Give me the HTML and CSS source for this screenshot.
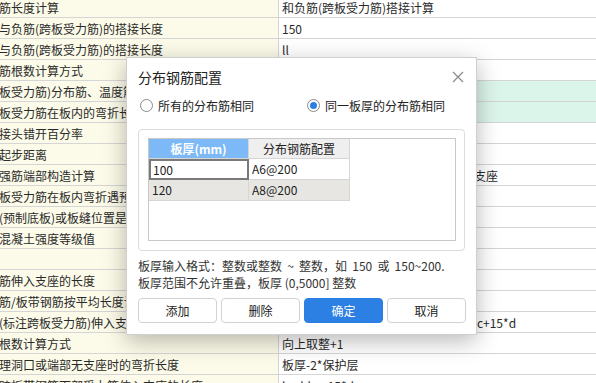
FILE: index.html
```html
<!DOCTYPE html>
<html lang="zh">
<head>
<meta charset="utf-8">
<title>分布钢筋配置</title>
<link rel="stylesheet" href="styles.css">
</head>
<body>
<div class="screen">
  <div class="grid">
    <div class="row"><div class="c1">筋长度计算</div><div class="c2">和负筋(跨板受力筋)搭接计算</div></div>
    <div class="row"><div class="c1">与负筋(跨板受力筋)的搭接长度</div><div class="c2">150</div></div>
    <div class="row"><div class="c1">与负筋(跨板受力筋)的搭接长度</div><div class="c2">ll</div></div>
    <div class="row"><div class="c1">筋根数计算方式</div><div class="c2">向下取整+1</div></div>
    <div class="row"><div class="c1">板受力筋)分布筋、温度筋是否带弯钩</div><div class="c2 green">否</div></div>
    <div class="row"><div class="c1">板受力筋在板内的弯折长度</div><div class="c2 green">板厚-2*保护层</div></div>
    <div class="row"><div class="c1">接头错开百分率</div><div class="c2">50%</div></div>
    <div class="row"><div class="c1">起步距离</div><div class="c2">s</div></div>
    <div class="row"><div class="c1">强筋端部构造计算</div><div class="c2">设计未注明时按构造要求锚入板端部支座</div></div>
    <div class="row"><div class="c1">板受力筋在板内弯折遇预制板时</div><div class="c2">否</div></div>
    <div class="row"><div class="c1">(预制底板)或板缝位置是否计算</div><div class="c2">是</div></div>
    <div class="row"><div class="c1">混凝土强度等级值</div><div class="c2">C30</div></div>
    <div class="row"><div class="c1"></div><div class="c2"></div></div>
    <div class="row"><div class="c1">筋伸入支座的长度</div><div class="c2">max(ha/2,12*d)</div></div>
    <div class="row"><div class="c1">筋/板带钢筋按平均长度计算</div><div class="c2">否</div></div>
    <div class="row"><div class="c1">(标注跨板受力筋)伸入支座的长度</div><div class="c2">能直锚时直锚，否则按下公式: ha-bhc+15*d</div></div>
    <div class="row"><div class="c1">根数计算方式</div><div class="c2">向上取整+1</div></div>
    <div class="row"><div class="c1">理洞口或端部无支座时的弯折长度</div><div class="c2">板厚-2*保护层</div></div>
    <div class="row"><div class="c1">跨板带钢筋下部受力筋伸入支座的长度</div><div class="c2">ha-bhc+15*d</div></div>
  </div>

  <div class="dialog">
    <div class="dlg-head">
      <span class="dlg-title">分布钢筋配置</span>
      <svg class="close" width="12" height="12" viewBox="0 0 12 12"><path d="M1 1L11 11M11 1L1 11" stroke="#8a8a8a" stroke-width="1.2" fill="none"/></svg>
    </div>
    <div class="radios">
      <label class="radio"><span class="dot"></span>所有的分布筋相同</label>
      <label class="radio"><span class="dot on"></span>同一板厚的分布筋相同</label>
    </div>
    <div class="group">
      <div class="tbl">
        <div class="trow head">
          <div class="cell h1">板厚(mm)</div>
          <div class="cell h2">分布钢筋配置</div>
        </div>
        <div class="trow">
          <div class="cell sel">100</div>
          <div class="cell">A6@200</div>
        </div>
        <div class="trow alt">
          <div class="cell">120</div>
          <div class="cell">A8@200</div>
        </div>
      </div>
    </div>
    <div class="help">
      <div class="wide">板厚输入格式：整数或整数 ~ 整数，如 150 或 150~200.</div>
      <div>板厚范围不允许重叠，板厚 (0,5000] 整数</div>
    </div>
    <div class="buttons">
      <button class="btn">添加</button>
      <button class="btn">删除</button>
      <button class="btn primary">确定</button>
      <button class="btn">取消</button>
    </div>
  </div>
</div>
</body>
</html>
```

FILE: styles.css
```css
* { box-sizing: border-box; }
html, body {
  margin: 0;
  padding: 0;
}
body {
  width: 596px;
  height: 383px;
  overflow: hidden;
  background: #ffffff;
  font-family: "Noto Sans CJK SC", "Noto Sans", sans-serif;
  font-size: 12px;
  color: #2a2a2a;
}
.screen {
  position: relative;
  width: 596px;
  height: 383px;
  overflow: hidden;
}
.grid {
  margin-top: -3px;
  display: flex;
  flex-direction: column;
}
.row {
  display: grid;
  grid-template-columns: 279px 1fr;
  height: 21px;
}
.c1, .c2 {
  border-bottom: 1px solid #d5d5d5;
  padding-top: 2px;
  line-height: 18px;
  white-space: nowrap;
  overflow: hidden;
}
.c1 {
  background: #fcfbe9;
  border-right: 1px solid #d5d5d5;
  margin-left: -1px;
}
.c2 {
  padding-left: 3px;
  background: #ffffff;
}
.c2.green { background: #dcf5eb; }

.dialog {
  position: absolute;
  left: 126px;
  top: 57px;
  width: 351px;
  height: 278px;
  background: #ffffff;
  border: 1px solid #cfcfcf;
  box-shadow: 0 6px 22px rgba(0, 0, 0, 0.28);
  padding: 0 10px 0 11px;
  display: flex;
  flex-direction: column;
}
.dlg-head {
  height: 37px;
  display: flex;
  align-items: center;
  justify-content: space-between;
}
.dlg-title {
  font-size: 14px;
  color: #222;
}
.close {
  margin-right: 2px;
}
.radios {
  display: flex;
  height: 18px;
  align-items: center;
  margin-left: 2px;
  margin-top: 1px;
}
.radio {
  display: flex;
  align-items: center;
  gap: 5px;
  color: #222;
}
.radio:first-child { width: 167px; }
.dot {
  width: 13px;
  height: 13px;
  border: 1px solid #8a8a8a;
  border-radius: 50%;
  display: inline-flex;
  align-items: center;
  justify-content: center;
  background: #fff;
}
.dot.on::after {
  content: "";
  width: 7px;
  height: 7px;
  border-radius: 50%;
  background: #2b80e6;
}
.group {
  margin-top: 15px;
  width: 327px;
  height: 122px;
  border: 1px solid #dcdcdc;
  border-radius: 4px;
  padding: 8px 8px 9px 9px;
}
.tbl {
  height: 100%;
  border: 1px solid #c8c8c8;
  background: #fff;
  width: 308px;
}
.trow {
  display: grid;
  grid-template-columns: 100px 101px;
  height: 21px;
}
.trow.head { height: 20px; }
.cell {
  border-right: 1px solid #d6d6d6;
  border-bottom: 1px solid #d6d6d6;
  padding-left: 3px;
  line-height: 20px;
  white-space: nowrap;
  color: #222;
}
.trow.head .cell { line-height: 19px; text-align: center; padding-left: 0; }
.h1 {
  background: #7db9f6;
  color: #fff !important;
  font-weight: bold;
}
.h2 { background: #efefef; }
.trow.alt .cell { background: #e7e6e2; }
.cell.sel {
  border: 2px solid #7a7a7a;
  line-height: 17px;
  padding-left: 2px;
}
.help {
  margin-top: 6px;
  line-height: 17px;
  color: #333;
  white-space: nowrap;
}
.help .wide { word-spacing: 2.5px; }
.buttons {
  margin-top: 7px;
  display: flex;
  gap: 4px;
}
.btn {
  width: 79px;
  height: 25px;
  border: 1px solid #d2d2d2;
  border-radius: 4px;
  background: #fff;
  font-family: inherit;
  font-size: 12px;
  color: #222;
  padding: 0;
}
.btn.primary {
  background: #2d80e3;
  border-color: #2d80e3;
  color: #fff;
}
```
